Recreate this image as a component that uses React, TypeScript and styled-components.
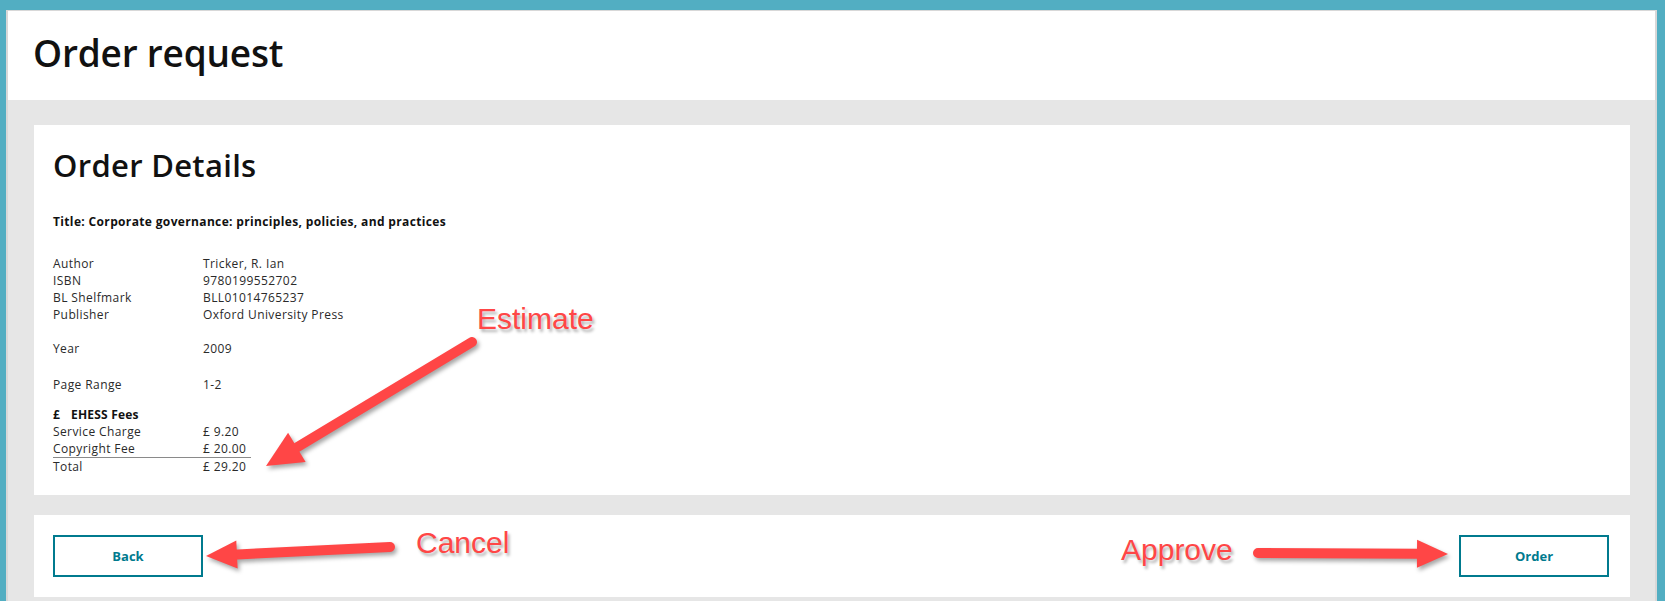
import React from "react";
import styled, { createGlobalStyle } from "styled-components";

const GlobalStyle = createGlobalStyle`
  html, body {
    margin: 0;
    padding: 0;
  }
  body {
    font-family: "Open Sans", Lato, sans-serif;
    color: #222;
    background: #52aec2;
  }
  * {
    box-sizing: border-box;
  }
`;

const Page = styled.div`
  position: relative;
  min-height: 100vh;
  display: flex;
  flex-direction: column;
  padding: 10px 8px 0 6px;
  background: #52aec2;
`;

const Window = styled.main`
  flex: 1;
  display: flex;
  flex-direction: column;
  background: #e6e6e6;
  border: 0 solid #d8d8d8;
  border-width: 1px 2px 0 2px;
`;

const Header = styled.header`
  height: 89px;
  background: #fff;
  padding: 16px 25px 0;
`;

const PageTitle = styled.h1`
  margin: 0;
  font-size: 37px;
  font-weight: 600;
  line-height: 52px;
  letter-spacing: -0.2px;
  color: #111;
`;

const Content = styled.div`
  display: flex;
  flex-direction: column;
  gap: 20px;
  padding: 25px 25px 0 26px;
`;

const Card = styled.section`
  background: #fff;
  padding: 22px 19px 20px;
`;

const ActionCard = styled.section`
  display: flex;
  justify-content: space-between;
  align-items: center;
  background: #fff;
  padding: 20px 21px 20px 19px;
`;

const CardTitle = styled.h2`
  margin: 0;
  font-size: 31px;
  font-weight: 600;
  line-height: 36px;
  letter-spacing: 0.3px;
  color: #111;
`;

const BookTitle = styled.p`
  margin: 30px 0 0;
  font-size: 12px;
  font-weight: 700;
  line-height: 17px;
  letter-spacing: 0.35px;
  color: #111;
`;

const DetailList = styled.div`
  margin-top: 25px;
  display: flex;
  flex-direction: column;
  font-size: 12px;
  line-height: 17px;
  letter-spacing: 0.4px;
`;

const Row = styled.div<{ $gap?: number; $rule?: boolean }>`
  display: grid;
  grid-template-columns: 150px 48px;
  width: 198px;
  margin-top: ${(p) => p.$gap ?? 0}px;
  border-bottom: ${(p) => (p.$rule ? "1px solid #8a8a8a" : "none")};
  color: #2a2a2a;
  white-space: nowrap;
`;

const FeeHeading = styled.div<{ $gap?: number }>`
  display: flex;
  gap: 11px;
  margin-top: ${(p) => p.$gap ?? 0}px;
  font-weight: 700;
  letter-spacing: 0.2px;
  color: #111;
`;

const OutlineButton = styled.button`
  width: 150px;
  height: 42px;
  background: #fff;
  border: 2px solid #007a8e;
  color: #007a8e;
  font-family: "Open Sans", Lato, sans-serif;
  font-size: 13px;
  font-weight: 700;
  cursor: pointer;
`;

const Overlay = styled.svg`
  position: absolute;
  left: 0;
  top: 0;
  pointer-events: none;
  filter: drop-shadow(2px 3px 2px rgba(0, 0, 0, 0.35));
`;

const Callout = styled.span<{ $x: number; $y: number }>`
  position: absolute;
  left: ${(p) => p.$x}px;
  top: ${(p) => p.$y}px;
  font-family: "Liberation Sans", Arial, sans-serif;
  font-size: 30px;
  line-height: 1;
  color: #ff4646;
  text-shadow: 2px 3px 3px rgba(0, 0, 0, 0.3);
  pointer-events: none;
`;

type Pt = [number, number];

const Arrow: React.FC<{ from: Pt; to: Pt; len: number; half: number }> = ({ from, to, len, half }) => {
  const dx = to[0] - from[0];
  const dy = to[1] - from[1];
  const d = Math.hypot(dx, dy);
  const ux = dx / d;
  const uy = dy / d;
  const bx = to[0] - ux * len;
  const by = to[1] - uy * len;
  const px = -uy * half;
  const py = ux * half;
  const pts = `${to[0]},${to[1]} ${bx + px},${by + py} ${bx - px},${by - py}`;
  return (
    <g>
      <line
        x1={from[0]}
        y1={from[1]}
        x2={bx + ux * 4}
        y2={by + uy * 4}
        stroke="#ff4646"
        strokeWidth={10}
        strokeLinecap="round"
      />
      <polygon points={pts} fill="#ff4646" />
    </g>
  );
};

const details = [
  { label: "Author", value: "Tricker, R. Ian", gap: 0 },
  { label: "ISBN", value: "9780199552702", gap: 0 },
  { label: "BL Shelfmark", value: "BLL01014765237", gap: 0 },
  { label: "Publisher", value: "Oxford University Press", gap: 0 },
  { label: "Year", value: "2009", gap: 17 },
  { label: "Page Range", value: "1-2", gap: 19 },
];

const fees = [
  { label: "Service Charge", value: "£ 9.20", rule: false },
  { label: "Copyright Fee", value: "£ 20.00", rule: true },
  { label: "Total", value: "£ 29.20", rule: false },
];

const App: React.FC = () => {
  return (
    <Page>
      <GlobalStyle />
      <Window>
        <Header>
          <PageTitle>Order request</PageTitle>
        </Header>
        <Content>
          <Card>
            <CardTitle>Order Details</CardTitle>
            <BookTitle>Title: Corporate governance: principles, policies, and practices</BookTitle>
            <DetailList>
              {details.map((d) => (
                <Row key={d.label} $gap={d.gap}>
                  <span>{d.label}</span>
                  <span>{d.value}</span>
                </Row>
              ))}
              <FeeHeading $gap={13}>
                <span>£</span>
                <span>EHESS Fees</span>
              </FeeHeading>
              {fees.map((f) => (
                <Row key={f.label} $rule={f.rule}>
                  <span>{f.label}</span>
                  <span>{f.value}</span>
                </Row>
              ))}
            </DetailList>
          </Card>
          <ActionCard>
            <OutlineButton>Back</OutlineButton>
            <OutlineButton>Order</OutlineButton>
          </ActionCard>
        </Content>
      </Window>

      <Overlay width={1665} height={601} viewBox="0 0 1665 601">
        <Arrow from={[472, 342]} to={[266, 466]} len={36} half={17} />
        <Arrow from={[390, 547]} to={[206, 556]} len={31} half={14} />
        <Arrow from={[1258, 553]} to={[1448, 554]} len={31} half={14} />
      </Overlay>
      <Callout $x={477} $y={304}>Estimate</Callout>
      <Callout $x={416} $y={528}>Cancel</Callout>
      <Callout $x={1121} $y={535}>Approve</Callout>
    </Page>
  );
};

export default App;
